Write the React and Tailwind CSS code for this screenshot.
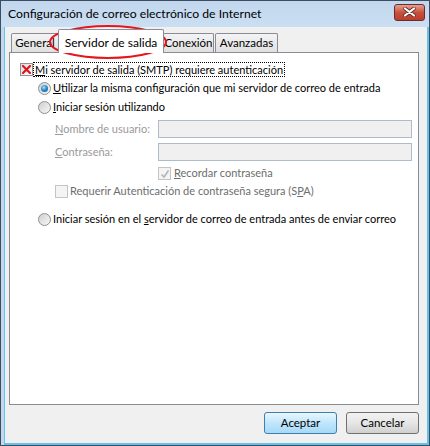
import React from "react";

const font = { fontFamily: 'Lato, "Liberation Sans", sans-serif' };

// Win7 classic-ish checkbox, optional red X or grey check
const CheckBox = ({ mark, disabled }) => (
  <span
    className={`inline-flex w-[13px] h-[13px] shrink-0 items-center justify-center border ${
      disabled ? "border-[#c4c4c4] bg-[#f4f4f4]" : "border-[#8e8f8f] bg-gradient-to-br from-[#dcdcdc] to-[#ffffff]"
    }`}
  >
    {mark === "x" && (
      <svg width="9" height="9" viewBox="0 0 9 9">
        <path d="M1 1 L8 8 M8 1 L1 8" stroke="#e0141e" strokeWidth="2.2" strokeLinecap="square" />
      </svg>
    )}
    {mark === "check" && (
      <svg width="10" height="10" viewBox="0 0 10 10">
        <path d="M1.5 5.5 L4 8 L8.5 1.5" stroke="#b4b4b4" strokeWidth="1.6" fill="none" />
      </svg>
    )}
  </span>
);

const Radio = ({ checked }) => (
  <span className="inline-flex w-[13px] h-[13px] shrink-0 items-center justify-center rounded-full border border-[#8e8f8f] bg-gradient-to-br from-[#cfcfcf] to-[#f8f8f8]">
    {checked && (
      <span className="w-[7px] h-[7px] rounded-full bg-[radial-gradient(circle_at_40%_35%,#a9e1ff_0%,#2d8ccf_45%,#0f4f8a_100%)]" />
    )}
  </span>
);

const Tab = ({ children, active, className = "" }) =>
  active ? (
    <div className={`relative z-10 -mb-px h-[24px] pt-[4px] bg-white border border-b-0 border-[#898c95] rounded-t-[2px] text-[12px] text-black whitespace-nowrap flex justify-center items-start ${className}`}>
      {children}
    </div>
  ) : (
    <div className={`h-[19px] bg-gradient-to-b from-[#f4f4f4] to-[#e0e0e0] border border-b-0 border-[#898c95] rounded-t-[2px] text-[11.5px] text-black whitespace-nowrap flex justify-center items-center ${className}`}>
      {children}
    </div>
  );

export default function App() {
  return (
    <div className="w-[430px] h-[446px] bg-[#c3d8ee] border border-[#3c4d60] flex flex-col overflow-hidden whitespace-nowrap" style={font}>
      {/* title bar */}
      <div className="h-[26px] shrink-0 flex items-center justify-between pl-[7px] pr-[4px] bg-gradient-to-b from-[#c2d7ed] to-[#cbdff3]">
        <span className="text-[12.2px] text-black leading-none pt-[1px]">
          Configuración de correo electrónico de Internet
        </span>
        <button className="w-[31px] h-[17px] -mt-[4px] rounded-[3px] border border-[#6e2a28] bg-gradient-to-b from-[#e5a092] via-[#c8513d] to-[#bb3d2b] flex items-center justify-center">
          <svg width="13" height="10" viewBox="0 0 13 10">
            <path d="M2 1.5 L11 8.5 M11 1.5 L2 8.5" stroke="#5a2a26" strokeWidth="3.6" strokeLinecap="round" />
            <path d="M2 1.5 L11 8.5 M11 1.5 L2 8.5" stroke="#ffffff" strokeWidth="2.2" strokeLinecap="round" />
          </svg>
        </button>
      </div>

      {/* body */}
      <div className="relative flex-1 ml-[3px] bg-[#f0f0f0] border-l border-r-2 border-b-2 border-[#64c3ea] flex flex-col pl-[4px] pr-[8px] pt-[1px]">
        {/* tabs */}
        <div className="flex items-end h-[24px] pl-[2px]">
          <Tab className="w-[48px]">General</Tab>
          <Tab active className="-ml-px w-[106px]">Servidor de salida</Tab>
          <Tab className="-ml-px w-[51px]">Conexión</Tab>
          <Tab className="ml-px w-[63px]">Avanzadas</Tab>
        </div>

        {/* panel */}
        <div className="h-[353px] bg-white border border-[#898c95] flex flex-col text-[11px] text-black pl-[10px] pr-[6px] pt-[9px]">
          <div className="flex items-center h-[15px]">
            <CheckBox mark="x" />
            <span className="ml-[1px] px-[1px] leading-[13px] outline outline-1 outline-dotted outline-black">
              <u>M</u>i servidor de salida (SMTP) requiere autenticación
            </span>
          </div>

          <div className="flex items-center h-[15px] mt-[4px] ml-[18px]">
            <Radio checked />
            <span className="ml-[2px]">
              <u>U</u>tilizar la misma configuración que mi servidor de correo de entrada
            </span>
          </div>

          <div className="flex items-center h-[15px] mt-[4px] ml-[18px]">
            <Radio />
            <span className="ml-[2px]">
              <u>I</u>niciar sesión utilizando
            </span>
          </div>

          <div className="flex items-center h-[18px] mt-[5px] ml-[35px] text-[#9a9a9a]">
            <span className="w-[103px]">
              <u>N</u>ombre de usuario:
            </span>
            <div className="flex-1 h-[18px] bg-[#f0f0f0] border border-[#adbbca]" />
          </div>

          <div className="flex items-center h-[18px] mt-[5px] ml-[35px] text-[#9a9a9a]">
            <span className="w-[103px]">
              <u>C</u>ontraseña:
            </span>
            <div className="flex-1 h-[18px] bg-[#f0f0f0] border border-[#adbbca]" />
          </div>

          <div className="flex items-center h-[13px] mt-[6px] ml-[138px] text-[#6d6d6d]">
            <CheckBox mark="check" disabled />
            <span className="ml-[3px]">
              <u>R</u>ecordar contraseña
            </span>
          </div>

          <div className="flex items-center h-[13px] mt-[5px] ml-[35px] text-[#6d6d6d]">
            <CheckBox disabled />
            <span className="ml-[2px]">
              Requerir Autenticación de contraseña segura (S<u>P</u>A)
            </span>
          </div>

          <div className="flex items-center h-[15px] mt-[14px] ml-[18px]">
            <Radio />
            <span className="ml-[2px]">
              Iniciar sesión en el <u>s</u>ervidor de correo de entrada antes de enviar correo
            </span>
          </div>
        </div>

        {/* buttons */}
        <div className="flex justify-end gap-[9px] mt-[7px] text-[11.5px]">
          <button className="w-[73px] h-[22px] rounded-[3px] border border-[#3c7fb1] bg-gradient-to-b from-[#eaf6fd] via-[#bee6fd] to-[#a7d9f5] text-black">
            Aceptar
          </button>
          <button className="w-[73px] h-[22px] rounded-[3px] border border-[#707070] bg-gradient-to-b from-[#f2f2f2] via-[#e6e6e6] to-[#d0d0d0] text-black">
            Cancelar
          </button>
        </div>

        {/* red annotation ellipse */}
        <svg className="absolute left-[42px] top-[-4px] pointer-events-none" width="122" height="40" viewBox="0 0 122 40">
          <ellipse cx="61" cy="19" rx="58" ry="16" fill="none" stroke="#e8141c" strokeWidth="2" />
        </svg>
      </div>
    </div>
  );
}
